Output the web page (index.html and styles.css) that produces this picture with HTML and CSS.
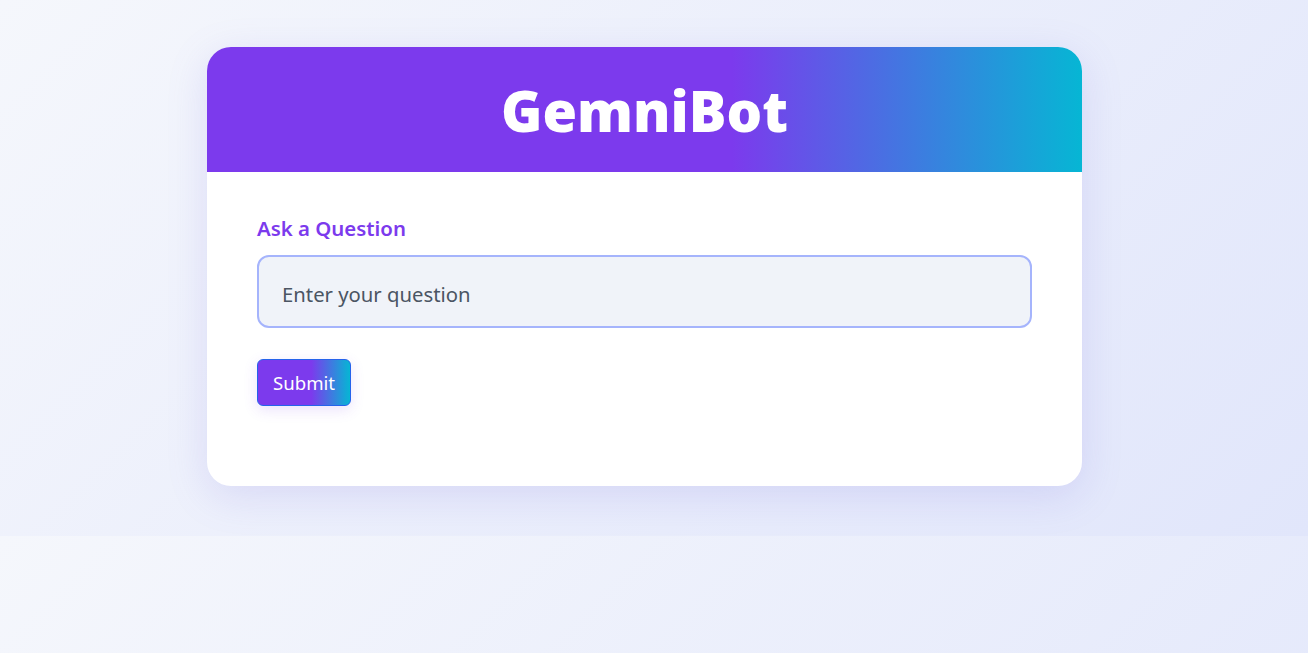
FILE: index.html
```html
<!DOCTYPE html>
<html lang="en">
<head>
<meta charset="utf-8">
<title>GemniBot</title>
<link rel="stylesheet" href="styles.css">
</head>
<body>
<main class="page">
  <section class="card">
    <header class="card-header">
      <h1 class="title">GemniBot</h1>
    </header>
    <div class="card-body">
      <label class="label" for="q">Ask a Question</label>
      <input class="input" id="q" type="text" placeholder="Enter your question">
      <button class="submit" type="button">Submit</button>
    </div>
  </section>
</main>
</body>
</html>
```

FILE: styles.css
```css
body {
  margin: 0;
  padding: 47px 0 50px;
  font-family: "Noto Sans", "Open Sans", sans-serif;
  background: linear-gradient(135deg, #f5f7fc 0%, #e1e6fb 100%);
}

.page {
  display: flex;
  justify-content: center;
  padding-right: 19px;
}

.card {
  width: 875px;
  background: #ffffff;
  border-radius: 24px;
  overflow: hidden;
  box-shadow: 0 10px 40px rgba(120, 110, 220, 0.18);
}

.card-header {
  height: 125px;
  display: flex;
  align-items: center;
  justify-content: center;
  background: linear-gradient(90deg, #7c3aed 60%, #06b6d4 100%);
}

.title {
  margin: 0;
  color: #ffffff;
  font-family: "Open Sans", "Noto Sans", sans-serif;
  font-weight: 800;
  font-size: 56px;
  line-height: 1;
}

.card-body {
  display: flex;
  flex-direction: column;
  align-items: flex-start;
  padding: 42px 50px 80px;
}

.label {
  color: #7c3aed;
  font-size: 20.4px;
  font-weight: 600;
  line-height: 28px;
  margin-bottom: 13px;
}

.input {
  box-sizing: border-box;
  width: 100%;
  height: 73px;
  padding: 4px 23px 0;
  border: 2px solid #a5b4fc;
  border-radius: 12px;
  background: #f0f3f9;
  font-family: inherit;
  font-size: 20.3px;
  color: #374151;
  outline: none;
}

.input::placeholder {
  color: #4b5563;
}

.submit {
  margin-top: 31px;
  height: 47px;
  padding: 0 15px;
  border: 1px solid #2563eb;
  border-radius: 6px;
  background: linear-gradient(90deg, #7c3aed 58%, #06b6d4 100%);
  color: #ffffff;
  font-family: inherit;
  font-size: 18.6px;
  box-shadow: 0 4px 14px rgba(124, 58, 237, 0.15);
  cursor: pointer;
}
```
